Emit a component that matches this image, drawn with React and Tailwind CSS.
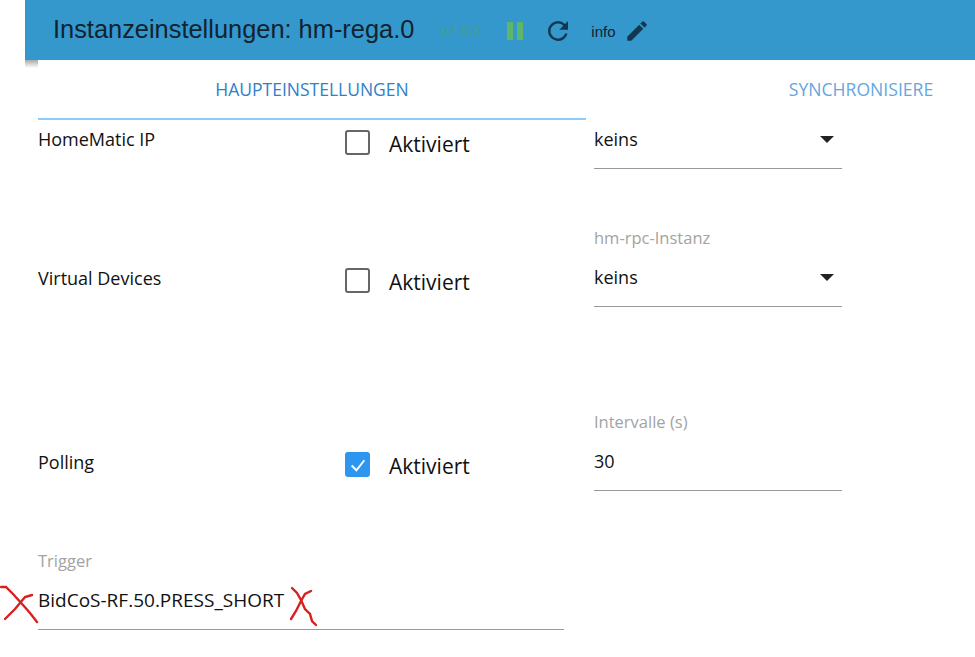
import React from "react";

const sans = "font-['Open_Sans','Noto_Sans',sans-serif]";

function Check({ checked }) {
  return (
    <div className="flex items-center w-[249px]">
      {checked ? (
        <div className="w-[25px] h-[25px] rounded-[3px] bg-[#2e96ee] flex items-center justify-center">
          <svg width="18" height="18" viewBox="0 0 17 17" fill="none" stroke="#fff" strokeWidth="1.8">
            <path d="M2.5 9 L7 13.5 L14.5 4" />
          </svg>
        </div>
      ) : (
        <div className="w-[25px] h-[25px] rounded-[3px] border-2 border-[#666] bg-white" />
      )}
      <span className="ml-[19px] mt-[3px] text-[21px] leading-[28px] text-[#111]">Aktiviert</span>
    </div>
  );
}

function Field({ label, value, select, width = "w-[248px]", valueClass = "text-[18px]" }) {
  return (
    <div className={`${width} flex flex-col`}>
      {label && <div className="h-[20px] mb-[10px] text-[16.5px] leading-[20px] text-[#a3a3a3]">{label}</div>}
      <div className="h-[49px] flex items-center justify-between border-b border-[#999] pb-[10px]">
        <span className={`${valueClass} leading-[24px] text-[#111]`}>{value}</span>
        {select && (
          <svg width="14" height="7" viewBox="0 0 14 7" className="mr-[8px]">
            <path d="M0 0 H14 L7 7 Z" fill="#222" />
          </svg>
        )}
      </div>
    </div>
  );
}

function Row({ name, checked, label, value, select, className, nameClass = "pb-[17px]" }) {
  return (
    <div className={`flex ${className}`}>
      <div className={`w-[307px] text-[18px] leading-[24px] text-[#111] self-end ${nameClass}`}>{name}</div>
      <div className="self-end pb-[11px]"><Check checked={checked} /></div>
      <Field label={label} value={value} select={select} />
    </div>
  );
}

export default function App() {
  return (
    <div className={`w-[975px] h-[657px] overflow-hidden bg-white ${sans}`}>
      <header className="relative ml-[25px] h-[60px] bg-[#3498cd] flex items-center pl-[28px] font-['Liberation_Sans',sans-serif]">
        <span className="text-[25.4px] leading-[30px] text-[#12232f] mr-[26px] -mt-[3px] whitespace-nowrap">Instanzeinstellungen: hm-rega.0</span>
        <span className="text-[15px] text-[#3f9f86] w-[41px] mr-[26px] mt-[3px]">v4.0.0</span>
        <svg width="18" height="20" viewBox="0 0 18 20" className="mr-[19px] mt-[1px]">
          <rect x="0" y="1" width="6" height="18" fill="#5cb868" />
          <rect x="10" y="1" width="6" height="18" fill="#5cb868" />
        </svg>
        <svg width="30" height="30" viewBox="0 0 24 24" className="mr-[18px] -ml-[1px] mt-[2px]">
          <path fill="#12384f" d="M17.65 6.35A7.96 7.96 0 0 0 12 4a8 8 0 1 0 7.73 10h-2.08A6 6 0 1 1 12 6c1.66 0 3.14.69 4.22 1.78L13 11h7V4l-2.35 2.35z" />
        </svg>
        <span className="text-[15px] text-[#12232f] mr-[8px] mt-[4px]">info</span>
        <svg width="26" height="26" viewBox="0 0 24 24" className="mt-[1px]">
          <path fill="#12384f" d="M3 17.25V21h3.75L17.81 9.94l-3.75-3.75L3 17.25zM20.71 7.04a1 1 0 0 0 0-1.41l-2.34-2.34a1 1 0 0 0-1.41 0l-1.83 1.83 3.75 3.75 1.83-1.83z" />
        </svg>
        <div className="absolute left-0 top-full w-[13px] h-[8px] bg-gradient-to-b from-[#aaa] to-white" />
      </header>

      <div className="pl-[38px]">
        <div className="flex h-[60px]">
          <div className="w-[548px] shrink-0 h-[60px] border-b-2 border-[#90caf9] flex items-center justify-center text-[17.5px] text-[#2f80c8]">
            HAUPTEINSTELLUNGEN
          </div>
          <div className="w-[550px] shrink-0 flex items-center justify-center pb-[2px] text-[17.6px] text-[#64a6de] whitespace-nowrap">
            SYNCHRONISIERE
          </div>
        </div>

        <Row name="HomeMatic IP" value="keins" select className="h-[49px]" nameClass="pb-[18px]" />
        <Row name="Virtual Devices" label="hm-rpc-Instanz" value="keins" select className="mt-[59px] h-[79px]" />
        <Row name="Polling" checked label="Intervalle (s)" value="30" className="mt-[105px] h-[79px]" />

        <div className="relative mt-[60px]">
          <Field label="Trigger" value="BidCoS-RF.50.PRESS_SHORT" width="w-[526px]" valueClass="text-[19px]" />
          <svg width="40" height="42" viewBox="0 0 40 42" className="absolute left-[-38px] top-[33px]" fill="none" stroke="#d8201f" strokeWidth="2.4" strokeLinecap="round">
            <path d="M1 3 L6 3 L13 10 L23 21 L30 29 L37 38" />
            <path d="M5 35 L15 25 L25 13 L32 11" />
          </svg>
          <svg width="30" height="42" viewBox="0 0 30 42" className="absolute left-[252px] top-[35px]" fill="none" stroke="#d8201f" strokeWidth="2.4" strokeLinecap="round">
            <path d="M2 2 L7 7 L11 14 L15 23 L20 28 L22 35 L26 39" />
            <path d="M1 33 L6 25 L11 15 L15 8 L21 5" />
          </svg>
        </div>
      </div>
    </div>
  );
}
